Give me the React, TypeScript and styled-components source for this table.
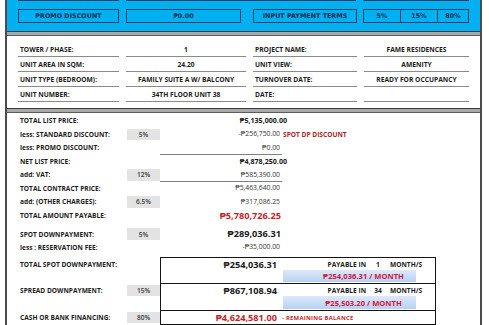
import React from 'react';
import styled, { createGlobalStyle } from 'styled-components';

const GlobalStyle = createGlobalStyle`
  html, body {
    margin: 0;
    padding: 0;
    background: #fff;
    overflow: hidden;
  }
  body {
    font-family: 'Open Sans', 'Liberation Sans', sans-serif;
    color: #1e1e1e;
  }
`;

// outer sheet, the first row of the blue band sits above the window
const Sheet = styled.div`
  width: 477px;
  margin: -13px 0 0 5px;
  box-sizing: border-box;
  border-left: 2px solid #4b4b4b;
  border-right: 2px solid #4b4b4b;
  height: 345px;
`;

const Band = styled.section`
  background: #00b0f0;
  padding: 0 11px 8px;
  display: flex;
  flex-direction: column;
  gap: 8px;
`;

const BandRow = styled.div`
  display: flex;
  height: 14px;
`;

const BandBox = styled.div<{ $w: number; $ml?: number }>`
  width: ${(p) => p.$w}px;
  margin-left: ${(p) => p.$ml ?? 0}px;
  box-sizing: border-box;
  border: 1px solid #1d3f63;
  display: flex;
  align-items: center;
  justify-content: center;
  font-family: 'DejaVu Sans', Verdana, sans-serif;
  font-weight: 700;
  font-size: 6.4px;
  color: #122c4c;
  white-space: nowrap;
`;

const TermsBox = styled.div`
  width: 106px;
  margin-left: 6px;
  box-sizing: border-box;
  border: 1px solid #1d3f63;
  display: grid;
  grid-template-columns: 36px 37px 1fr;
`;

const Term = styled.div<{ $first?: boolean }>`
  display: flex;
  align-items: center;
  justify-content: center;
  border-left: ${(p) => (p.$first ? 'none' : '1px solid #1d3f63')};
  font-family: 'DejaVu Sans', Verdana, sans-serif;
  font-weight: 700;
  font-size: 6.4px;
  color: #122c4c;
`;

const Rule = styled.div`
  height: 3px;
  background: #a9a9a9;
  border-top: 1px solid #3c3c3c;
  border-bottom: 1px solid #5c5c5c;
`;

const Info = styled.section`
  padding: 6px 11px 6px;
  display: grid;
  grid-template-columns: 101px 120px 104px 105px;
  grid-auto-rows: 15px;
  column-gap: 7px;
`;

const InfoCell = styled.div<{ $center?: boolean }>`
  display: flex;
  align-items: center;
  justify-content: ${(p) => (p.$center ? 'center' : 'flex-start')};
  padding-left: ${(p) => (p.$center ? 0 : 2)}px;
  border-bottom: 1px solid #8a8a8a;
  font-size: 6.7px;
  font-weight: 700;
  color: #1c1c1c;
  white-space: nowrap;
`;

const Prices = styled.section`
  padding: 1px 11px 0;
`;

const PriceLine = styled.div<{ $gap?: number }>`
  display: grid;
  grid-template-columns: 109px 33px 122px 1fr;
  height: 13.5px;
  margin-top: ${(p) => p.$gap ?? 0}px;
`;

const Label = styled.div`
  display: flex;
  align-items: center;
  padding-left: 2px;
  font-size: 6.6px;
  font-weight: 700;
  color: #1c1c1c;
  white-space: nowrap;
`;

const Pct = styled.div<{ $on: boolean }>`
  margin: 1px 0;
  background: ${(p) => (p.$on ? '#e3e3e3' : 'transparent')};
  display: flex;
  align-items: center;
  justify-content: center;
  font-size: 6.6px;
  font-weight: 600;
  color: #3a3a3a;
`;

type Tone = 'bold' | 'plain' | 'big' | 'bigRed';

const Value = styled.div<{ $tone: Tone; $rule?: boolean }>`
  display: flex;
  align-items: center;
  justify-content: flex-end;
  white-space: nowrap;
  border-bottom: 1px solid ${(p) => (p.$rule ? '#808080' : 'transparent')};
  font-size: ${(p) => (p.$tone === 'plain' ? '6.8px' : p.$tone === 'bold' ? '7.1px' : '9.2px')};
  font-weight: ${(p) => (p.$tone === 'plain' ? 400 : 700)};
  color: ${(p) => (p.$tone === 'bigRed' ? '#c41e2a' : p.$tone === 'plain' ? '#333' : '#1a1a1a')};
  padding-right: ${(p) => (p.$tone === 'plain' ? 2 : p.$tone === 'bold' ? 0 : 1)}px;
  margin-right: ${(p) => (p.$tone === 'bold' ? -5 : 0)}px;
`;

const Note = styled.div`
  display: flex;
  align-items: center;
  padding-left: 1px;
  font-size: 6.6px;
  font-weight: 700;
  color: #ad2428;
  white-space: nowrap;
`;

const DpGrid = styled.div`
  margin-top: 3px;
  display: grid;
  grid-template-columns: 109px 33px 276px;
`;

const DpLabel = styled.div`
  margin-top: 1px;
  height: 12px;
  display: flex;
  align-items: center;
  padding-left: 2px;
  font-size: 6.6px;
  font-weight: 700;
  color: #1c1c1c;
  white-space: nowrap;
`;

const DpPct = styled.div<{ $on: boolean }>`
  margin-top: 2px;
  height: 11px;
  align-self: start;
  background: ${(p) => (p.$on ? '#e3e3e3' : 'transparent')};
  display: flex;
  align-items: center;
  justify-content: center;
  font-size: 6.6px;
  font-weight: 600;
  color: #3a3a3a;
`;

const DpBox = styled.div<{ $h: number; $last?: boolean }>`
  height: ${(p) => p.$h}px;
  box-sizing: border-box;
  border: 1px solid #141414;
  border-bottom-width: ${(p) => (p.$last ? 1 : 0)}px;
  display: grid;
  grid-template-columns: 121px 1fr;
  grid-template-rows: ${(p) => (p.$last ? '1fr' : '12px 1fr')};
`;

const Amount = styled.div<{ $red?: boolean }>`
  display: flex;
  align-items: center;
  justify-content: flex-end;
  padding-right: 5px;
  font-size: 9.2px;
  font-weight: 700;
  color: ${(p) => (p.$red ? '#c41e2a' : '#1a1a1a')};
  white-space: nowrap;
`;

const Payable = styled.div`
  display: flex;
  align-items: center;
  font-size: 6.6px;
  font-weight: 700;
  color: #1c1c1c;
  white-space: nowrap;
`;

const PayWord = styled.span<{ $w: number; $align: string }>`
  display: inline-block;
  width: ${(p) => p.$w}px;
  text-align: ${(p) => p.$align};
`;

const Monthly = styled.div`
  grid-column: 2;
  margin: 0 19px 1px 1px;
  background: linear-gradient(180deg, #dde9fb 0%, #b7d1f3 100%);
  display: flex;
  align-items: center;
  justify-content: center;
  padding-left: 28px;
  font-size: 7.6px;
  font-weight: 700;
  color: #d0163a;
  white-space: nowrap;
`;

const Remaining = styled.div`
  display: flex;
  align-items: center;
  font-size: 5.9px;
  letter-spacing: 0.25px;
  font-weight: 700;
  color: #c41e2a;
  white-space: nowrap;
`;

const info: [string, string, string, string][] = [
  ['TOWER / PHASE:', '1', 'PROJECT NAME:', 'FAME RESIDENCES'],
  ['UNIT AREA IN SQM:', '24.20', 'UNIT VIEW:', 'AMENITY'],
  ['UNIT TYPE (BEDROOM):', 'FAMILY SUITE A W/ BALCONY', 'TURNOVER DATE:', 'READY FOR OCCUPANCY'],
  ['UNIT NUMBER:', '34TH FLOOR UNIT 38', 'DATE:', ''],
];

type PriceItem = {
  label: string;
  pct?: string;
  value: string;
  tone: Tone;
  rule?: boolean;
  note?: string;
  gap?: number;
};

const prices: PriceItem[] = [
  { label: 'TOTAL LIST PRICE:', value: '₱5,135,000.00', tone: 'bold' },
  { label: 'less: STANDARD DISCOUNT:', pct: '5%', value: '-₱256,750.00', tone: 'plain', note: 'SPOT DP DISCOUNT' },
  { label: 'less: PROMO DISCOUNT:', value: '₱0.00', tone: 'plain', rule: true },
  { label: 'NET LIST PRICE:', value: '₱4,878,250.00', tone: 'bold' },
  { label: 'add: VAT:', pct: '12%', value: '₱585,390.00', tone: 'plain', rule: true },
  { label: 'TOTAL CONTRACT PRICE:', value: '₱5,463,640.00', tone: 'plain' },
  { label: 'add: (OTHER CHARGES):', pct: '6.5%', value: '₱317,086.25', tone: 'plain' },
  { label: 'TOTAL AMOUNT PAYABLE:', value: '₱5,780,726.25', tone: 'bigRed' },
  { label: 'SPOT DOWNPAYMENT:', pct: '5%', value: '₱289,036.31', tone: 'big', gap: 5 },
  { label: 'less : RESERVATION FEE:', value: '-₱35,000.00', tone: 'plain' },
];

const PayLine = ({ months }: { months: string }) => (
  <Payable>
    <PayWord $w={84} $align="right">PAYABLE IN</PayWord>
    <PayWord $w={24} $align="center">{months}</PayWord>
    <span>MONTH/S</span>
  </Payable>
);

export default function App() {
  return (
    <>
      <GlobalStyle />
      <Sheet>
        <Band>
          <BandRow>
            <BandBox $w={101} />
            <BandBox $w={230} $ml={7} />
            <BandBox $w={106} $ml={7} />
          </BandRow>
          <BandRow>
            <BandBox $w={101}>PROMO DISCOUNT</BandBox>
            <BandBox $w={115} $ml={7}>₱0.00</BandBox>
            <BandBox $w={104} $ml={12}>INPUT PAYMENT TERMS</BandBox>
            <TermsBox>
              <Term $first>5%</Term>
              <Term>15%</Term>
              <Term>80%</Term>
            </TermsBox>
          </BandRow>
        </Band>
        <Rule />

        <Info>
          {info.map((row) => (
            <React.Fragment key={row[0]}>
              <InfoCell>{row[0]}</InfoCell>
              <InfoCell $center>{row[1]}</InfoCell>
              <InfoCell>{row[2]}</InfoCell>
              <InfoCell $center>{row[3]}</InfoCell>
            </React.Fragment>
          ))}
        </Info>
        <Rule />

        <Prices>
          {prices.map((p) => (
            <PriceLine key={p.label} $gap={p.gap}>
              <Label>{p.label}</Label>
              <Pct $on={!!p.pct}>{p.pct}</Pct>
              <Value $tone={p.tone} $rule={p.rule}>
                {p.value}
              </Value>
              <Note>{p.note}</Note>
            </PriceLine>
          ))}

          <DpGrid>
            <DpLabel>TOTAL SPOT DOWNPAYMENT:</DpLabel>
            <DpPct $on={false} />
            <DpBox $h={26}>
              <Amount>₱254,036.31</Amount>
              <PayLine months="1" />
              <Monthly>₱254,036.31 / MONTH</Monthly>
            </DpBox>

            <DpLabel>SPREAD DOWNPAYMENT:</DpLabel>
            <DpPct $on>15%</DpPct>
            <DpBox $h={27}>
              <Amount>₱867,108.94</Amount>
              <PayLine months="34" />
              <Monthly>₱25,503.20 / MONTH</Monthly>
            </DpBox>

            <DpLabel>CASH OR BANK FINANCING:</DpLabel>
            <DpPct $on>80%</DpPct>
            <DpBox $h={15} $last>
              <Amount $red>₱4,624,581.00</Amount>
              <Remaining>- REMAINING BALANCE</Remaining>
            </DpBox>
          </DpGrid>
        </Prices>
      </Sheet>
    </>
  );
}
